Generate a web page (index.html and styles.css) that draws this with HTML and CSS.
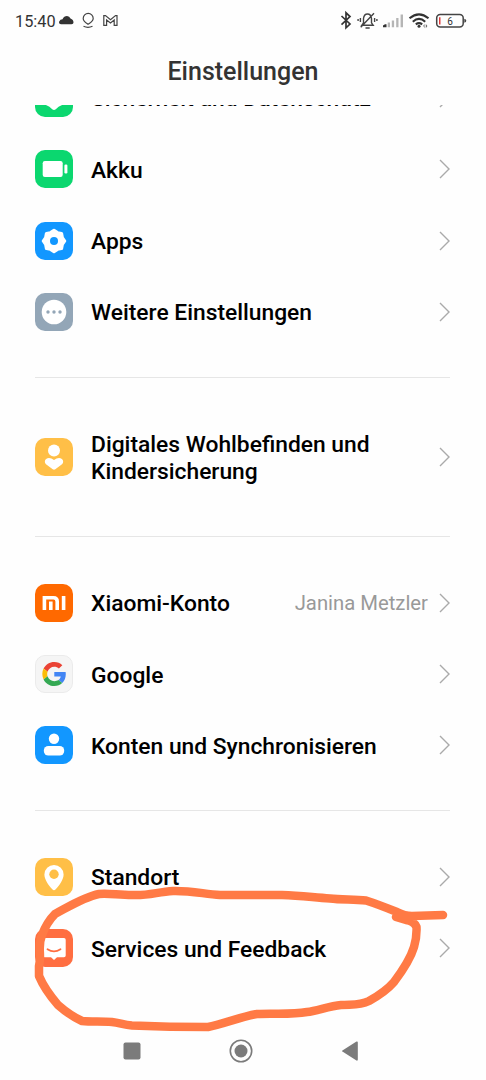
FILE: index.html
```html
<!DOCTYPE html>
<html lang="de">
<head>
  <meta charset="UTF-8">
  <title>Einstellungen</title>
  <link rel="stylesheet" href="styles.css">
</head>
<body>

  <div class="status-bar">
    <span class="clock">15:40</span>
    <svg class="status-left" width="64" height="20" viewBox="0 0 64 20">
      <path fill="#333" d="M2 14.200Q-.6 14 .2 11.500Q1.200 9.300 3.500 9.300Q5 6 8 6Q10.500 6.200 11.500 8.500Q14.500 9.500 14.500 12.500Q14.500 14.200 12.500 14.200Z"/>
      <g fill="none" stroke="#444" stroke-width="1.200">
        <path d="M29 14.300C26 12.300 24.200 11.200 24.200 8.400A5 5 0 0 1 34.200 8.400C34.200 11.200 32 12.300 29 14.300Z"/>
        <path d="M24.500 16.200Q29 18.400 33.500 16.200"/>
        <path d="M44.800 15.300V5.600H46.500L51.500 9.700L56.500 5.600H58V15.300H55.200V10L51.500 13L47.600 10V15.300Z"/>
      </g>
    </svg>
    <svg class="status-right" width="128" height="20" viewBox="0 0 128 20">
      <path fill="none" stroke="#333" stroke-width="1.700" d="M1.500 6L10 14L6 17.800V2.800L10 6.600L1.500 14.600"/>
      <g fill="none" stroke="#444" stroke-width="1.400">
        <path d="M21.800 15.300H33.200L31.500 12.800V8.500Q31 4 27.500 4Q24 4 23.500 8.500V12.800ZM34 3.300L20.700 17.300M25.500 18H29.700"/>
        <path d="M20.400 8V12M18.100 9V11M34.600 8V12M36.900 9V11"/>
      </g>
      <path fill="#333" d="M43 17.200V15.500L45 14.300H46.500V17.200Z"/>
      <path fill="#b5b5b5" d="M47.700 12.500H50V17.200H47.700ZM51.800 10.500H54.100V17.200H51.800ZM56.200 8H58.500V17.200H56.200ZM60.600 4.500H63V17.200H60.600Z"/>
      <g fill="none" stroke="#333" stroke-width="2.100">
        <path d="M69.500 8.300Q79 .3 88.500 8.300M72.800 11.700Q79 6.200 85.200 11.700M75.800 14.400Q79 12 82.200 14.400"/>
      </g>
      <circle cx="79" cy="16.200" r="1.500" fill="#333"/>
      <path fill="#666" d="M83.300 15.700L84.500 14V18.200ZM85.800 14V18.200L87.400 16Z"/>
      <rect x="96.700" y="4.600" width="26.500" height="12.400" rx="3.500" fill="none" stroke="#444" stroke-width="1.500"/>
      <path fill="#444" d="M124.300 8.800Q126.300 9.200 126.300 10.800Q126.300 12.400 124.300 12.800Z"/>
      <path fill="#e03c3c" d="M99 7.200H100.500V14.400H99Z"/>
      <text class="battery-text" x="110" y="14.800">6</text>
    </svg>
  </div>

  <h1 class="title">Einstellungen</h1>

  <div class="list">
    <div class="row">
      <svg class="icon" viewBox="0 0 38 38">
        <rect width="38" height="38" rx="10" fill="#0bd76f"/>
        <path fill="#fff" d="M19 7L29 11V20Q28.500 25.500 26.500 26.300Q23.500 27.500 20.800 30.300Q19 31.600 17.200 30.300Q14.500 27.500 11.500 26.300Q9.500 25.500 9 20V11Z"/>
      </svg>
      <span class="label">Sicherheit und Datenschutz</span>
      <svg class="chevron" viewBox="0 0 11 20"><path d="M1 1L10 10L1 19"/></svg>
    </div>
    <div class="row">
      <svg class="icon" viewBox="0 0 38 38">
        <rect width="38" height="38" rx="10" fill="#0bd76f"/>
        <rect x="7.700" y="11" width="20" height="16" rx="2.200" fill="#fff"/>
        <rect x="29.400" y="14.500" width="3" height="9" rx="1.200" fill="#fff"/>
      </svg>
      <span class="label">Akku</span>
      <svg class="chevron" viewBox="0 0 11 20"><path d="M1 1L10 10L1 19"/></svg>
    </div>
    <div class="row">
      <svg class="icon" viewBox="0 0 38 38">
        <rect width="38" height="38" rx="10" fill="#1297ff"/>
        <path fill="#fff" stroke="#fff" stroke-width="3" stroke-linejoin="round" d="M19 8.200L22.500 10.600L26.600 11.400L27.400 15.500L29.800 19L27.400 22.500L26.600 26.600L22.500 27.400L19 29.800L15.500 27.400L11.400 26.600L10.600 22.500L8.200 19L10.600 15.500L11.400 11.400L15.500 10.600Z"/>
        <circle cx="19" cy="19" r="4" fill="#1297ff"/>
      </svg>
      <span class="label">Apps</span>
      <svg class="chevron" viewBox="0 0 11 20"><path d="M1 1L10 10L1 19"/></svg>
    </div>
    <div class="row">
      <svg class="icon" viewBox="0 0 38 38">
        <rect width="38" height="38" rx="10" fill="#93a6b7"/>
        <circle cx="19" cy="19" r="12.300" fill="#fff"/>
        <g fill="#93a6b7"><circle cx="13" cy="19" r="1.700"/><circle cx="19" cy="19" r="1.700"/><circle cx="25" cy="19" r="1.700"/></g>
      </svg>
      <span class="label">Weitere Einstellungen</span>
      <svg class="chevron" viewBox="0 0 11 20"><path d="M1 1L10 10L1 19"/></svg>
    </div>

    <hr class="divider">

    <div class="row row-tall">
      <svg class="icon" viewBox="0 0 38 38">
        <rect width="38" height="38" rx="10" fill="#ffbf47"/>
        <circle cx="19" cy="12.600" r="6" fill="#fff"/>
        <path fill="#fff" d="M19 22Q22.500 19.500 25.500 20.300Q28.800 21.500 28 24.700Q27.500 26 26 27L20.300 31.300Q19 32.200 17.700 31.300L12 27Q10.500 26 10 24.700Q9.200 21.500 12.500 20.300Q15.500 19.500 19 22Z"/>
      </svg>
      <span class="label">Digitales Wohlbefinden und<br>Kindersicherung</span>
      <svg class="chevron" viewBox="0 0 11 20"><path d="M1 1L10 10L1 19"/></svg>
    </div>

    <hr class="divider">

    <div class="row">
      <svg class="icon" viewBox="0 0 38 38">
        <rect width="38" height="38" rx="10" fill="#ff6900"/>
        <path fill="none" stroke="#fff" stroke-width="3.600" d="M9.400 26V13.800H18.500Q22.200 13.800 22.200 17.500V26M15.800 17.500V26M28.600 12V26"/>
      </svg>
      <span class="label">Xiaomi-Konto</span>
      <span class="value">Janina Metzler</span>
      <svg class="chevron" viewBox="0 0 11 20"><path d="M1 1L10 10L1 19"/></svg>
    </div>
    <div class="row">
      <svg class="icon" viewBox="0 0 38 38">
        <rect x=".5" y=".5" width="37" height="37" rx="9.500" fill="#f5f5f5" stroke="#ebebeb"/>
        <g transform="translate(7.300 7) scale(.5)">
          <path fill="#ea4335" d="M24 9.500c3.540 0 6.710 1.220 9.210 3.600l6.850-6.850C35.900 2.380 30.470 0 24 0 14.620 0 6.510 5.380 2.560 13.220l7.980 6.190C12.430 13.720 17.740 9.500 24 9.500z"/>
          <path fill="#4285f4" d="M46.980 24.550c0-1.570-.15-3.090-.38-4.550H24v9.020h12.940c-.58 2.960-2.260 5.480-4.780 7.180l7.730 6c4.510-4.180 7.090-10.360 7.090-17.650z"/>
          <path fill="#fbbc05" d="M10.530 28.590c-.48-1.450-.76-2.990-.76-4.590s.27-3.140.76-4.590l-7.980-6.190C.92 16.460 0 20.120 0 24c0 3.880.92 7.540 2.560 10.780l7.970-6.190z"/>
          <path fill="#34a853" d="M24 48c6.480 0 11.930-2.130 15.890-5.810l-7.730-6c-2.150 1.450-4.920 2.300-8.160 2.300-6.260 0-11.570-4.220-13.470-9.910l-7.980 6.190C6.510 42.620 14.620 48 24 48z"/>
        </g>
      </svg>
      <span class="label">Google</span>
      <svg class="chevron" viewBox="0 0 11 20"><path d="M1 1L10 10L1 19"/></svg>
    </div>
    <div class="row">
      <svg class="icon" viewBox="0 0 38 38">
        <rect width="38" height="38" rx="10" fill="#1297ff"/>
        <circle cx="19" cy="12.800" r="5.200" fill="#fff"/>
        <rect x="8.800" y="20" width="20.400" height="9.500" rx="4.500" fill="#fff"/>
      </svg>
      <span class="label">Konten und Synchronisieren</span>
      <svg class="chevron" viewBox="0 0 11 20"><path d="M1 1L10 10L1 19"/></svg>
    </div>

    <hr class="divider">

    <div class="row">
      <svg class="icon" viewBox="0 0 38 38">
        <rect width="38" height="38" rx="10" fill="#ffbf47"/>
        <path fill="#fff" d="M19 7A9.600 9.600 0 0 1 28.600 16.600C28.600 21.500 24.500 27.500 20.700 31.300Q19 33 17.300 31.300C13.500 27.500 9.400 21.500 9.400 16.600A9.600 9.600 0 0 1 19 7Z"/>
        <circle cx="19" cy="16.300" r="4.700" fill="#ffbf47"/>
      </svg>
      <span class="label">Standort</span>
      <svg class="chevron" viewBox="0 0 11 20"><path d="M1 1L10 10L1 19"/></svg>
    </div>
    <div class="row">
      <svg class="icon" viewBox="0 0 38 38">
        <rect width="38" height="38" rx="10" fill="#ff6e41"/>
        <path fill="#fff" d="M9.500 9H29Q30.700 9 30.700 10.700V26.500Q30.700 28.200 29 28.200H22L19 31L16 28.200H9.500Q7.800 28.200 7.800 26.500V10.700Q7.800 9 9.500 9Z"/>
        <path fill="none" stroke="#ff6e41" stroke-width="1.800" stroke-linecap="round" d="M12.500 20.200Q19 24.500 25.500 20.200"/>
      </svg>
      <span class="label">Services und Feedback</span>
      <svg class="chevron" viewBox="0 0 11 20"><path d="M1 1L10 10L1 19"/></svg>
    </div>
  </div>

  <div class="nav-bar">
    <svg width="18" height="18" viewBox="0 0 18 18"><rect x=".5" y=".5" width="17" height="17" rx="2" fill="#7b7b7b"/></svg>
    <svg width="24" height="24" viewBox="0 0 24 24"><circle cx="12" cy="12" r="10.700" fill="none" stroke="#7b7b7b" stroke-width="1.600"/><circle cx="12" cy="12" r="6.500" fill="#7b7b7b"/></svg>
    <svg width="18" height="20" viewBox="0 0 18 20"><path fill="#7b7b7b" d="M1.400 9.500Q.8 10 1.400 10.500L15.500 19.500Q16.800 20 16.800 18.500V1.500Q16.800 0 15.500 .5Z"/></svg>
  </div>

  <!-- hand drawn marker -->
  <svg class="marker" width="486" height="1080" viewBox="0 0 486 1080">
    <path d="M443 915L412 916Q405 916 397 912C387 908 377 904 366 900.500C354 899 342 900 330 898.500C310 897 300 895.500 282 895H220C204 894 191 890.500 173 891C157 892 148 896 132 895C118 895 108 893 99 894C84 897 70 906 55 914C49 920 45 927 42 935C37 947 42 954 39 966V976C44 988 52 998 58 1005C66 1012 73 1017 82 1021C92 1022 102 1021 112 1022C120 1023 124 1025 132 1025.500Q170 1027 208 1027C223 1024 240 1017 257 1014C273 1013 290 1015 307 1012C317 1011 329 1006 341 1005C351 1004 359 1006 369 1001C378 996 388 989 394 982C403 970 411 957 414 947Q417 937 416.500 927Q414 921 406 920L396 917"/>
  </svg>

</body>
</html>
```

FILE: styles.css
```css
body {
  font-family: Roboto, "Liberation Sans", sans-serif;
  background-color: #fefefe;
  margin: 0;
  height: 1080px;
  display: flex;
  flex-direction: column;
  overflow: hidden;
  position: relative;
}

.status-bar {
  height: 40px;
  box-sizing: border-box;
  padding: 10px 18px 0 15px;
  display: flex;
  align-items: flex-start;
  color: #333;
}

.clock {
  font-size: 16.3px;
  line-height: 23px;
  width: 44px;
}

.status-right {
  margin-left: auto;
}

.battery-text {
  font-size: 10px;
  fill: #333;
  text-anchor: middle;
}

.title {
  margin: 0;
  height: 65px;
  line-height: 63px;
  text-align: center;
  font-size: 25px;
  font-weight: 500;
  color: #333;
}

.list {
  height: 917px;
  overflow: hidden;
  padding: 0 36px 0 35px;
}

.row {
  display: flex;
  align-items: center;
  height: 71.3px;
}

.row:first-child {
  margin-top: -42.7px;
}

.row-tall {
  height: 99.5px;
}

.icon {
  width: 38px;
  height: 38px;
  margin-right: 18px;
  flex-shrink: 0;
}

.label {
  flex: 1;
  font-size: 22.8px;
  line-height: 27px;
  font-weight: 500;
  color: #000;
  white-space: nowrap;
  padding-top: 2px;
}

.value {
  font-size: 20.3px;
  color: #999;
  margin-right: 11px;
}

.chevron {
  width: 11px;
  height: 20px;
  fill: none;
  stroke: #aaa;
  stroke-width: 1.4;
}

.divider {
  border: none;
  height: 1px;
  background-color: #e6e6e6;
  margin: 29.3px 0 29.8px;
}

.nav-bar {
  height: 57px;
  display: flex;
  align-items: center;
  justify-content: space-between;
  padding: 0 127px 0 123px;
}

.marker {
  position: absolute;
  top: 0;
  left: 0;
  fill: none;
  stroke: #ff7a45;
  stroke-width: 8.5;
  stroke-linecap: round;
  stroke-linejoin: round;
}
```
